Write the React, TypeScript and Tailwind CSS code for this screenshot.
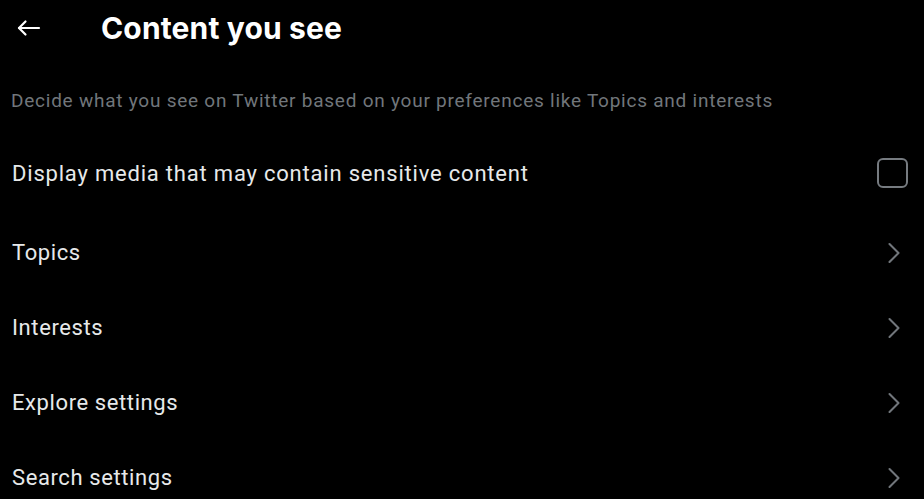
import { ChevronRight } from 'lucide-react'

const rows = ['Topics', 'Interests', 'Explore settings', 'Search settings']

export default function App() {
  return (
    <div className="min-h-screen bg-black text-[#e7e9ea] font-['Roboto',sans-serif] overflow-hidden">
      {/* Header */}
      <div className="flex items-center h-[56px] px-[17px]">
        <svg width="24" height="18" viewBox="0 0 24 18" fill="none" stroke="white" strokeWidth="2.2" strokeLinecap="round" strokeLinejoin="round">
          <path d="M22 9H2" />
          <path d="M8.5 2.5 2 9l6.5 6.5" />
        </svg>
        <h1 className="ml-[60px] text-[30px] font-bold text-white font-['Inter',sans-serif] tracking-[0.15px]">
          Content you see
        </h1>
      </div>

      <p className="mt-[33px] px-[11px] text-[19px] tracking-[0.76px] text-[#71767b] leading-[24px]">
        Decide what you see on Twitter based on your preferences like Topics and interests
      </p>

      <div className="mt-[35px] flex items-center justify-between pl-[12px] pr-[16px] h-[50px]">
        <span className="text-[22px] tracking-[0.8px]">Display media that may contain sensitive content</span>
        <div className="w-[31px] h-[30px] rounded-[6px] border-2 border-[#767b80]" />
      </div>

      <div className="mt-[17px]">
        {rows.map(r => (
          <div key={r} className="flex items-center justify-between pl-[12px] pr-[12px] h-[75px]">
            <span className="text-[22px] tracking-[0.6px]">{r}</span>
            <ChevronRight className="w-[36px] h-[36px] text-[#71767b]" strokeWidth={1.4} />
          </div>
        ))}
      </div>
    </div>
  )
}
